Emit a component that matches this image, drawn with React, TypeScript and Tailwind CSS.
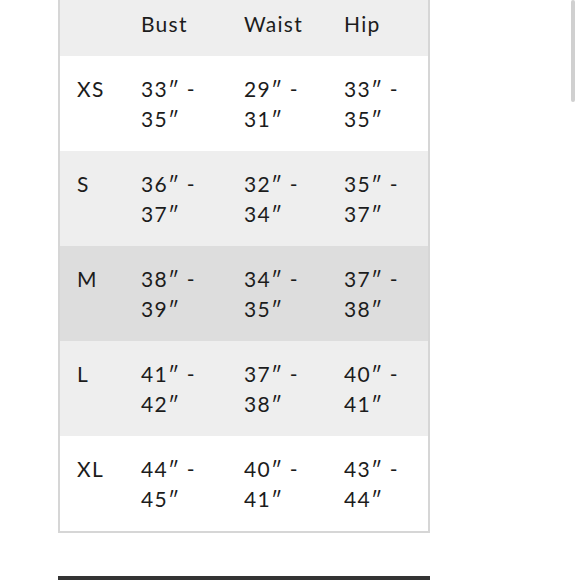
const rows = [
  { size: "XS", bust: ["33″ -", "35″"], waist: ["29″ -", "31″"], hip: ["33″ -", "35″"], bg: "bg-white" },
  { size: "S", bust: ["36″ -", "37″"], waist: ["32″ -", "34″"], hip: ["35″ -", "37″"], bg: "bg-[#eeeeee]" },
  { size: "M", bust: ["38″ -", "39″"], waist: ["34″ -", "35″"], hip: ["37″ -", "38″"], bg: "bg-[#dddddd]" },
  { size: "L", bust: ["41″ -", "42″"], waist: ["37″ -", "38″"], hip: ["40″ -", "41″"], bg: "bg-[#eeeeee]" },
  { size: "XL", bust: ["44″ -", "45″"], waist: ["40″ -", "41″"], hip: ["43″ -", "44″"], bg: "bg-white" },
];

const cols = "grid grid-cols-[64px_103px_100px_1fr]";

function Cell({ lines }: { lines: string[] }) {
  return (
    <div className="pl-[17px]">
      {lines.map((l) => (
        <div key={l}>{l}</div>
      ))}
    </div>
  );
}

export default function App() {
  return (
    <div className="relative w-[580px] h-[580px] overflow-hidden bg-white font-['Lato',sans-serif] text-[21px] leading-[30px] tracking-[0.06em] text-[#1c1c1c]">
      <div className="ml-[58px] w-[372px] border-x-2 border-b-2 border-[#d6d6d6]">
        <div className={`${cols} bg-[#eeeeee] pt-[9px] pb-[17px]`}>
          <div />
          <Cell lines={["Bust"]} />
          <Cell lines={["Waist"]} />
          <Cell lines={["Hip"]} />
        </div>
        {rows.map((r) => (
          <div key={r.size} className={`${cols} ${r.bg} pt-[18px] pb-[17px]`}>
            <Cell lines={[r.size]} />
            <Cell lines={r.bust} />
            <Cell lines={r.waist} />
            <Cell lines={r.hip} />
          </div>
        ))}
      </div>
      <div className="ml-[58px] mt-[43px] w-[372px] h-[10px] bg-[#333333]" />
      <div className="absolute right-[5px] top-0 w-[4px] h-[102px] rounded-full bg-[#d0d0d0]" />
    </div>
  );
}
